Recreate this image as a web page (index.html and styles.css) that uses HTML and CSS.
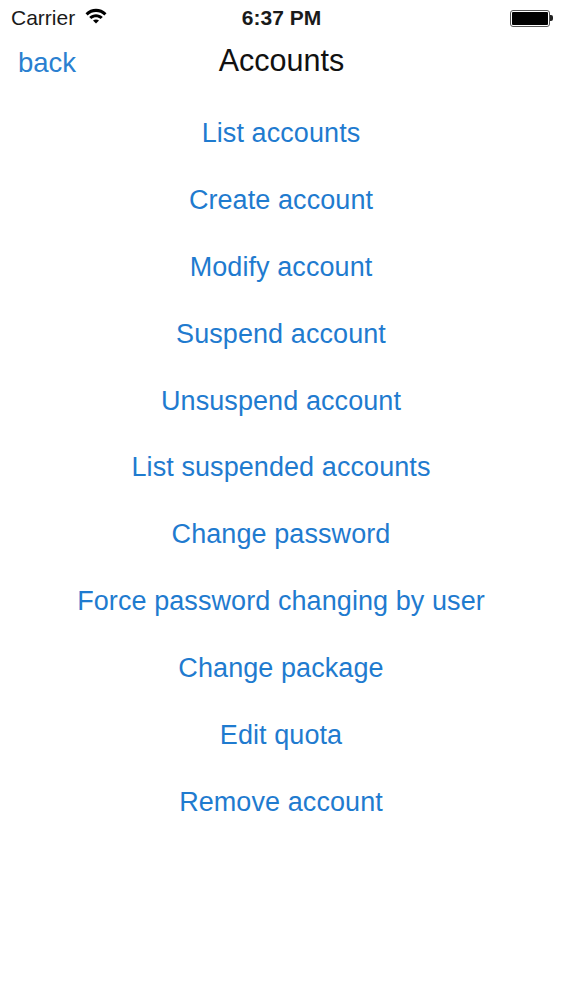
FILE: index.html
```html
<!DOCTYPE html>
<html lang="en">
<head>
  <meta charset="UTF-8">
  <title>Accounts</title>
  <link rel="stylesheet" href="styles.css">
</head>
<body>

  <div class="status">
    <div class="status-left">
      <span>Carrier</span>
      <svg class="wifi" width="22" height="16" viewBox="0 0 22 16">
        <path d="M0.5 5.2 C6.5 -0.6 15.5 -0.6 21.5 5.2 L19.4 7.4 C14.6 2.8 7.4 2.8 2.6 7.4 Z" fill="#000"/>
        <path d="M4.2 9 C8.2 5.2 13.8 5.2 17.8 9 L15.6 11.1 C13 8.6 9 8.6 6.4 11.1 Z" fill="#000"/>
        <path d="M8 12.6 C9.8 11 12.2 11 14 12.6 L11 15.6 Z" fill="#000"/>
      </svg>
    </div>
    <div class="time">6:37 PM</div>
    <div class="battery"><div class="battery-body"><div class="battery-fill"></div></div><div class="battery-tip"></div></div>
  </div>

  <div class="nav">
    <a class="back">back</a>
    <h1>Accounts</h1>
  </div>

  <div class="menu">
    <a>List accounts</a>
    <a>Create account</a>
    <a>Modify account</a>
    <a>Suspend account</a>
    <a>Unsuspend account</a>
    <a>List suspended accounts</a>
    <a>Change password</a>
    <a>Force password changing by user</a>
    <a>Change package</a>
    <a>Edit quota</a>
    <a>Remove account</a>
  </div>

</body>
</html>
```

FILE: styles.css
```css
body {
  font-family: 'Liberation Sans', Arial, sans-serif;
  background: #fff;
  margin: 0;
  color: #000;
}

.status {
  display: grid;
  grid-template-columns: 1fr auto 1fr;
  align-items: center;
  height: 36px;
  padding: 0 10px 0 11px;
}

.status-left {
  display: flex;
  align-items: center;
  gap: 10px;
  font-size: 21px;
  color: #1a1a1a;
}

.wifi {
  margin-top: -4px;
}

.time {
  font-size: 21px;
  font-weight: bold;
  color: #1a1a1a;
  margin-left: -1px;
}

.battery {
  display: flex;
  align-items: center;
  justify-content: flex-end;
}

.battery-body {
  width: 40px;
  height: 17px;
  box-sizing: border-box;
  border: 1px solid #555;
  border-radius: 3px;
  padding: 1px;
}

.battery-fill {
  height: 100%;
  background: #000;
  border-radius: 1px;
}

.battery-tip {
  width: 3px;
  height: 6px;
  background: #222;
  border-radius: 0 2px 2px 0;
}

.nav {
  position: relative;
  height: 50px;
  text-align: center;
}

.nav h1 {
  margin: 0;
  font-size: 30.5px;
  font-weight: normal;
  line-height: 48px;
  color: #111;
}

.back {
  position: absolute;
  left: 18px;
  top: 10px;
  font-size: 27.5px;
  line-height: 34px;
  color: #2a80d0;
}

.menu {
  display: flex;
  flex-direction: column;
  align-items: center;
  padding: 14px 1px 0 0;
  font-size: 27px;
  letter-spacing: 0.08px;
  color: #1f7bcf;
}

.menu a {
  height: 66.9px;
  line-height: 66.9px;
}
```
